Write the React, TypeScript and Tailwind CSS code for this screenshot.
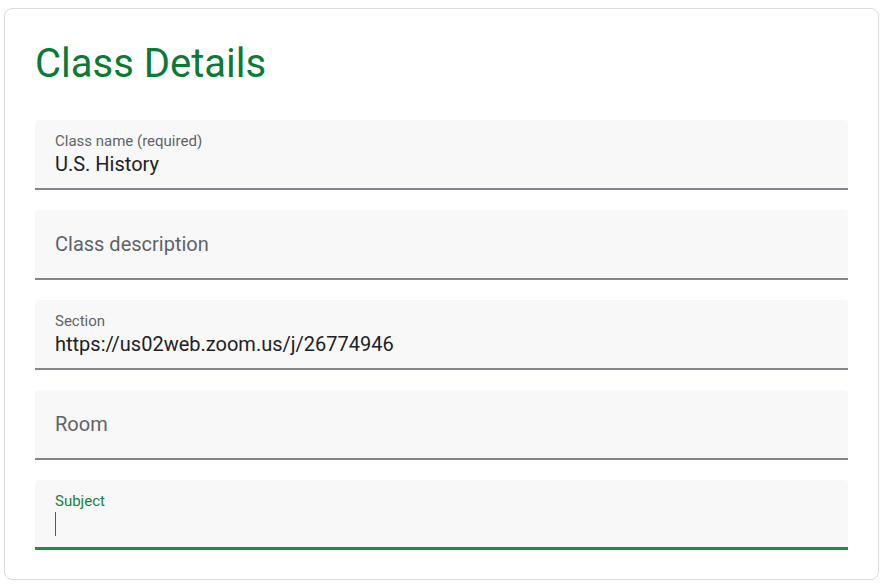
const FIELDS = [
  { label: "Class name (required)", value: "U.S. History" },
  { label: "Class description", value: "" },
  { label: "Section", value: "https://us02web.zoom.us/j/26774946" },
  { label: "Room", value: "" },
];

function Field({ label, value }: { label: string; value: string }) {
  if (!value) {
    return (
      <div className="h-[70px] rounded-t-[4px] bg-[#f8f8f8] border-b-2 border-[#80868b] px-5 flex items-center">
        <span className="text-[20px] leading-6 text-[#5f6368]">{label}</span>
      </div>
    );
  }
  return (
    <div className="h-[70px] rounded-t-[4px] bg-[#f8f8f8] border-b-2 border-[#80868b] px-5 pt-3">
      <div className="text-[15px] leading-[18px] text-[#5f6368]">{label}</div>
      <div className="mt-[2px] text-[20px] leading-6 text-[#202124]">{value}</div>
    </div>
  );
}

export default function App() {
  return (
    <div
      className="w-[886px] h-[586px] bg-white pt-2 pl-1 pr-[7px] pb-[6px]"
      style={{ fontFamily: "Roboto, 'Liberation Sans', sans-serif" }}
    >
      <div className="border border-[#dadce0] rounded-lg px-[30px] pt-[31px] pb-[29px]">
        <h1 className="text-[40px] leading-[48px] text-[#0b7a34]">Class Details</h1>

        <div className="mt-[32px] flex flex-col gap-5">
          {FIELDS.map((f) => (
            <Field key={f.label} label={f.label} value={f.value} />
          ))}

          {/* focused field */}
          <div className="h-[70px] rounded-t-[4px] bg-[#f8f8f8] border-b-[3px] border-[#1e8e3e] px-5 pt-3">
            <div className="text-[15px] leading-[18px] text-[#188038]">Subject</div>
            <div className="mt-[2px] h-6 flex items-center">
              <span className="w-px h-6 bg-[#188038]" />
            </div>
          </div>
        </div>
      </div>
    </div>
  );
}
